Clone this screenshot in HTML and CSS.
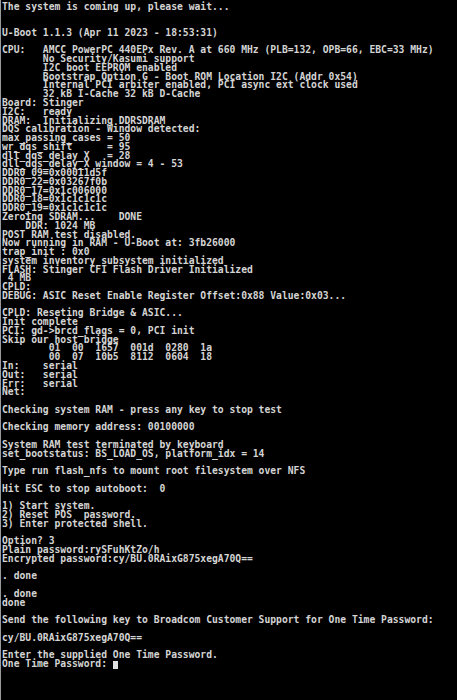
FILE: index.html
```html
<!DOCTYPE html>
<html>
<head>
<meta charset="utf-8">
<link rel="stylesheet" href="styles.css">
</head>
<body>
<pre class="term">The system is coming up, please wait...


U-Boot 1.1.3 (Apr 11 2023 - 18:53:31)

CPU:   AMCC PowerPC 440EPx Rev. A at 660 MHz (PLB=132, OPB=66, EBC=33 MHz)
       No Security/Kasumi support
       I2C boot EEPROM enabled
       Bootstrap Option G - Boot ROM Location I2C (Addr 0x54)
       Internal PCI arbiter enabled, PCI async ext clock used
       32 kB I-Cache 32 kB D-Cache
Board: Stinger
I2C:   ready
DRAM:  Initializing DDRSDRAM
DQS calibration - Window detected:
max_passing_cases = 50
wr_dqs_shift      = 95
dll_dqs_delay_X   = 28
dll_dqs_delay_X window = 4 - 53
DDR0_09=0x00011d5f
DDR0_22=0x03267f0b
DDR0_17=0x1c006000
DDR0_18=0x1c1c1c1c
DDR0_19=0x1c1c1c1c
Zeroing SDRAM...    DONE
    DDR: 1024 MB
POST RAM test disabled.
Now running in RAM - U-Boot at: 3fb26000
trap_init : 0x0
system inventory subsystem initialized
FLASH: Stinger CFI Flash Driver Initialized
 4 MB
CPLD:
DEBUG: ASIC Reset Enable Register Offset:0x88 Value:0x03...

CPLD: Reseting Bridge &amp; ASIC...
Init complete
PCI: gd-&gt;brcd_flags = 0, PCI init
Skip our host bridge
        01  00  1657  001d  0280  1a
        00  07  10b5  8112  0604  18
In:    serial
Out:   serial
Err:   serial
Net:

Checking system RAM - press any key to stop test

Checking memory address: 00100000

System RAM test terminated by keyboard
set_bootstatus: BS_LOAD_OS, platform_idx = 14

Type run flash_nfs to mount root filesystem over NFS

Hit ESC to stop autoboot:  0

1) Start system.
2) Reset POS  password.
3) Enter protected shell.

Option? 3
Plain password:rySFuhKtZo/h
Encrypted password:cy/BU.0RAixG875xegA70Q==

. done

. done
done

Send the following key to Broadcom Customer Support for One Time Password:

cy/BU.0RAixG875xegA70Q==

Enter the supplied One Time Password.
One Time Password: <span class="cursor"> </span></pre>
</body>
</html>
```
FILE: styles.css
```css
html, body {
  margin: 0;
  padding: 0;
  background: #000;
  height: 100%;
}
body {
  border-left: 1px solid #9a9a9a;
  box-sizing: border-box;
}
.term {
  margin: 0;
  padding: 2.6px 0 0 1px;
  font-family: "DejaVu Sans Mono", "Liberation Mono", monospace;
  font-size: 9.7px;
  font-weight: bold;
  line-height: 8.77px;
  color: #d4d4d4;
  white-space: pre;
  letter-spacing: 0;
}
.cursor {
  display: inline-block;
  width: 5px;
  height: 8px;
  background: #e0e0e0;
  vertical-align: -1px;
}
```
